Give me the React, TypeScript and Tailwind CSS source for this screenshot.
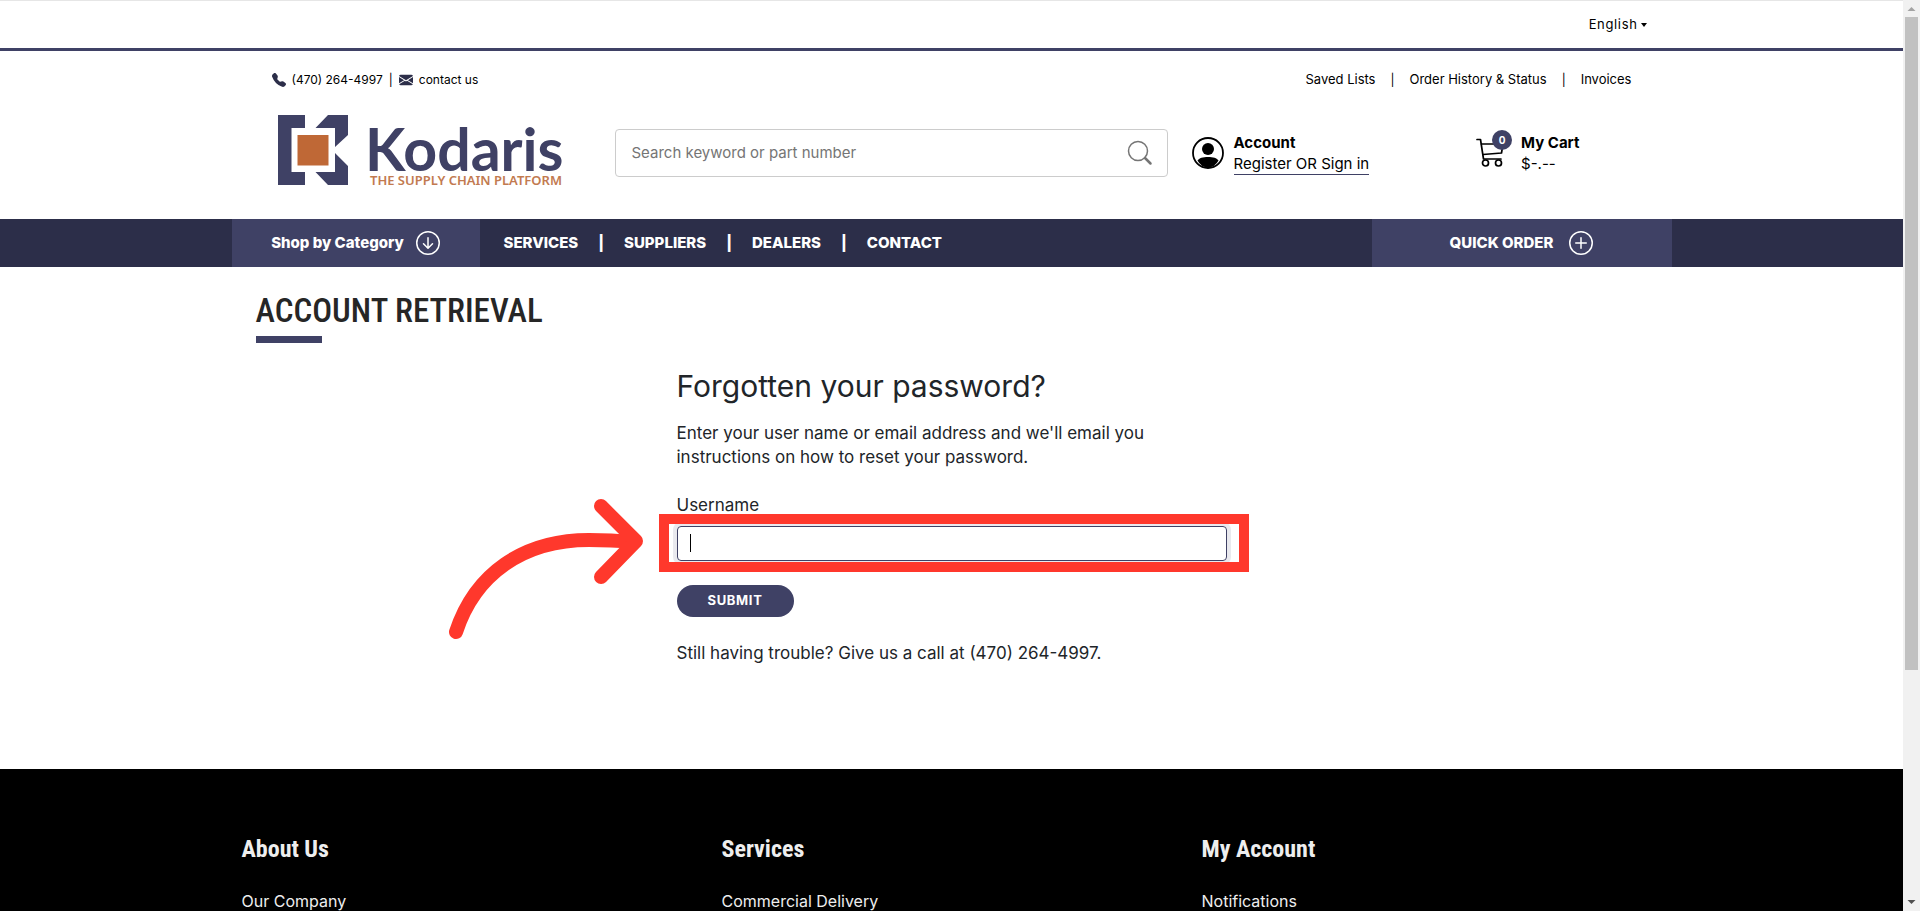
import React, { useState } from 'react'
import { BsArrowDownCircle, BsPlusCircle, BsTelephoneFill, BsEnvelopeFill } from 'react-icons/bs'

const navLinks = ['SERVICES', 'SUPPLIERS', 'DEALERS', 'CONTACT']
const accountLinks = ['Saved Lists', 'Order History & Status', 'Invoices']

const footerColumns = [
  { title: 'About Us', links: ['Our Company'] },
  { title: 'Services', links: ['Commercial Delivery'] },
  { title: 'My Account', links: ['Notifications'] },
]

function Logo() {
  return (
    <svg viewBox="0 1 296 78" className="h-[78px] w-[296px] overflow-visible" role="img" aria-label="Kodaris, the supply chain platform">
      <path d="M2 2H29V15H15.500V59H29V72H2Z" fill="#3f4165" />
      <path d="M52 2H72V22L59 34V15H39.500Z" fill="#3f4165" />
      <path d="M59 40L72 53V72H52L39.500 59H59Z" fill="#3f4165" />
      <rect x="21.500" y="22" width="31" height="30.500" fill="#bf6836" />
      <text x="89" y="58" fontSize="59" fontWeight="700" fontFamily="Lato, sans-serif" fill="#3f4165">Kodaris</text>
      <text x="94" y="72" fontSize="13" fontWeight="600" fontFamily="'Noto Sans', sans-serif" fill="#c27a50">THE SUPPLY CHAIN PLATFORM</text>
    </svg>
  )
}

function SearchIcon() {
  return (
    <svg viewBox="0 0 26 26" className="h-[26px] w-[26px]" fill="none" stroke="#757575">
      <circle cx="11" cy="11" r="9.500" strokeWidth="1.500" />
      <path d="M18 18L23.500 23.500" strokeWidth="2.500" strokeLinecap="round" />
    </svg>
  )
}

function AccountIcon() {
  return (
    <svg viewBox="0 0 32 32" className="h-8 w-8 shrink-0">
      <circle cx="16" cy="16" r="15" fill="none" stroke="#000" strokeWidth="1.800" />
      <circle cx="16" cy="12" r="6" fill="#000" />
      <path d="M5.500 23.500C7 21 11 20 16 20S25 21 26.500 23.500A14.500 14.500 0 0 1 16 31A14.500 14.500 0 0 1 5.500 23.500Z" fill="#000" />
    </svg>
  )
}

function CartIcon() {
  return (
    <svg viewBox="0 0 30 30" className="h-[30px] w-[30px]" fill="none" stroke="#000" strokeWidth="1.700" strokeLinecap="round" strokeLinejoin="round">
      <path d="M1 1.500H4.500L7.500 21H25" />
      <path d="M5.500 6H27L25.500 15L7 16.500" />
      <circle cx="9.500" cy="25" r="3" />
      <circle cx="22.500" cy="25" r="3" />
    </svg>
  )
}

function Scrollbar() {
  return (
    <div className="flex w-[17px] shrink-0 flex-col items-center justify-between bg-[#f1f1f1]" aria-hidden="true">
      <div className="flex w-full flex-1 flex-col items-center">
        <svg viewBox="0 0 17 17" className="h-[17px] w-[17px]"><path d="M4.500 11L8.500 7L12.500 11Z" fill="#a3a3a3" /></svg>
        <div className="h-[73%] w-[13px] bg-[#c1c1c1]" />
      </div>
      <svg viewBox="0 0 17 17" className="h-[17px] w-[17px]"><path d="M4.500 6L8.500 10L12.500 6Z" fill="#505050" /></svg>
    </div>
  )
}

export default function App() {
  const [username, setUsername] = useState('')

  return (
    <div className="flex h-screen overflow-hidden bg-white font-['Inter',sans-serif] text-[#212529]">
      <div className="min-w-0 flex-1 overflow-hidden">
        <div className="flex h-[51px] items-center border-t border-b-3 border-t-[#e6e6e6] border-b-[#3f4165]">
          <div className="mx-auto flex w-full max-w-[1440px] justify-end pr-6">
            <button className="flex items-center gap-0.5 text-[13px] tracking-wider text-black">
              English
              <svg viewBox="0 0 8 4" className="h-1 w-2"><path d="M1 0H7L4 4Z" fill="#000" /></svg>
            </button>
          </div>
        </div>

        <header className="mx-auto h-[168px] max-w-[1440px] px-10 pt-[19px] text-black">
          <div className="flex h-5 items-center justify-between">
            <div className="flex items-center text-xs">
              <BsTelephoneFill className="mr-1.5 h-3.5 w-3.5 text-[#2c2e49]" />
              <a href="#phone">(470) 264-4997</a>
              <span className="mx-1.5">|</span>
              <BsEnvelopeFill className="mr-1.5 h-3.5 w-3.5 text-[#2c2e49]" />
              <a href="#contact">contact us</a>
            </div>
            <div className="flex items-center text-[13px]">
              {accountLinks.map((label, i) => (
                <React.Fragment key={label}>
                  {i > 0 && <span className="mx-[15px] text-xs">|</span>}
                  <a href="#account">{label}</a>
                </React.Fragment>
              ))}
            </div>
          </div>

          <div className="mt-6 flex items-center">
            <a href="#home" className="ml-1"><Logo /></a>
            <form className="ml-[43px] flex h-12 w-[553px] items-center rounded-sm border border-[#ccc] pr-3.5 pl-4" onSubmit={e => e.preventDefault()}>
              <input
                aria-label="Search"
                placeholder="Search keyword or part number"
                className="min-w-0 flex-1 text-[15px] outline-none placeholder:text-[#757575]"
              />
              <button aria-label="Search"><SearchIcon /></button>
            </form>
            <div className="ml-6 flex items-center gap-2.5">
              <AccountIcon />
              <div className="text-[15px] leading-[21px]">
                <div className="font-bold">Account</div>
                <a href="#signin" className="block border-b border-[#3f4165]">Register OR Sign in</a>
              </div>
            </div>
            <div className="mr-13 ml-auto flex items-center gap-[15px]">
              <div className="relative">
                <CartIcon />
                <span className="absolute -top-2 left-4 flex h-5 w-5 items-center justify-center rounded-full bg-[#3f4165] text-[10px] font-bold text-white">0</span>
              </div>
              <div className="text-[15px] leading-[21px]">
                <div className="font-bold">My Cart</div>
                <div>$-.--</div>
              </div>
            </div>
          </div>
        </header>

        <nav className="bg-[#2c2e49] text-[15px] font-extrabold text-white">
          <div className="mx-auto flex h-12 max-w-[1440px] items-center">
            <button className="flex h-full w-[248px] items-center justify-center gap-3 bg-[#3f4165]">
              Shop by Category <BsArrowDownCircle className="h-6 w-6" />
            </button>
            <div className="flex flex-1 items-center pl-6">
              {navLinks.map((label, i) => (
                <React.Fragment key={label}>
                  {i > 0 && <span className="mx-5">|</span>}
                  <a href="#nav">{label}</a>
                </React.Fragment>
              ))}
            </div>
            <button className="flex h-full w-[300px] items-center justify-center gap-4 bg-[#3f4165]">
              QUICK ORDER <BsPlusCircle className="h-6 w-6" />
            </button>
          </div>
        </nav>

        <main className="mx-auto h-[502px] max-w-[1440px] px-6 pt-[18px]">
          <h1 className="font-['Liberation_Sans_Narrow','Roboto_Condensed',sans-serif] text-[33px] leading-[51px] font-medium text-[#262626]">
            ACCOUNT RETRIEVAL
          </h1>
          <div className="h-[7px] w-[66px] bg-[#3f4165]" />

          <form className="mx-auto mt-[26px] w-[550px]" onSubmit={e => e.preventDefault()}>
            <h2 className="text-3xl leading-[34px]">Forgotten your password?</h2>
            <p className="mt-[18px] text-[17px] leading-6">
              Enter your user name or email address and we'll email you
              <br />
              instructions on how to reset your password.
            </p>
            <label htmlFor="username" className="mt-6 block text-[17px] leading-6">Username</label>
            <div className="relative mt-[9px]">
              <input
                id="username"
                autoFocus
                value={username}
                onChange={e => setUsername(e.target.value)}
                className="block h-[35px] w-full rounded-sm border border-[#3f4165] px-3 ring-4 ring-[#e9e9ee] outline-none"
              />
              {username === '' && <span className="absolute top-2 left-[13px] h-[18px] w-px bg-black" />}
              <div className="pointer-events-none absolute -top-3 -right-[22px] -bottom-[11px] -left-[18px] border-10 border-[#ff382c]" />
              {/* hand-drawn pointer towards the field */}
              <svg viewBox="0 0 200 146" className="pointer-events-none absolute -top-[30px] -left-[230px] h-[146px] w-[200px] max-w-none" fill="none" stroke="#ff382c" strokeWidth="14" strokeLinecap="round" strokeLinejoin="round">
                <path d="M9 136C28 78 76 44 142 44C156 44 170 44.500 184 46" />
                <path d="M154 10L189 45L154 81" />
              </svg>
            </div>
            <button className="mt-6 h-8 w-[117px] rounded-full bg-[#3f4165] text-[13px] font-bold tracking-wider text-white">SUBMIT</button>
            <p className="mt-6 text-[17px] leading-6">Still having trouble? Give us a call at (470) 264-4997.</p>
          </form>
        </main>

        <footer className="bg-black text-[#eee]">
          <div className="mx-auto grid h-[200px] max-w-[1440px] grid-cols-3 pt-[60px]">
            {footerColumns.map(col => (
              <div key={col.title} className="px-2.5">
                <h3 className="font-['Liberation_Sans_Narrow','Roboto_Condensed',sans-serif] text-2xl leading-10 font-bold">{col.title}</h3>
                <ul className="mt-5 text-base leading-6">
                  {col.links.map(link => <li key={link}><a href="#footer">{link}</a></li>)}
                </ul>
              </div>
            ))}
          </div>
        </footer>
      </div>
      <Scrollbar />
    </div>
  )
}
